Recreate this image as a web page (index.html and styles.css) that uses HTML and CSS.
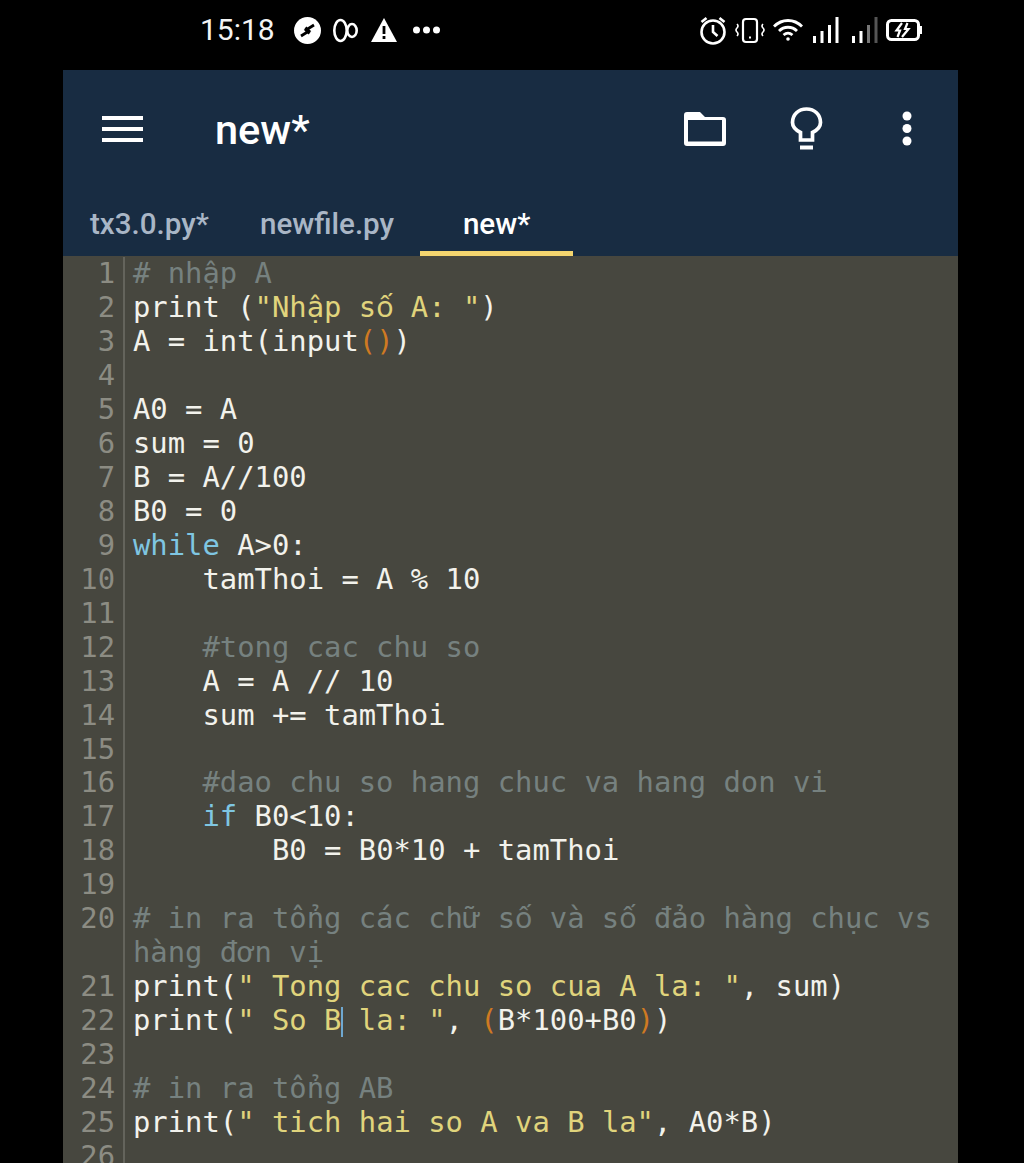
FILE: index.html
```html
<!DOCTYPE html>
<html lang="vi">
<head>
<meta charset="utf-8">
<title>new*</title>
<link rel="stylesheet" href="styles.css">
</head>
<body>
<div class="status">
  <div class="status-left">
    <span class="time">15:18</span>
    <svg width="27" height="27" viewBox="0 0 27 27"><circle cx="13.5" cy="13.5" r="13.5" fill="#fff"/><path d="M20 8L12 13L15.500 16.500M7 19L15 14L11.500 10.500" fill="none" stroke="#000" stroke-width="2.800"/></svg>
    <svg width="25" height="27" viewBox="0 0 25 27" fill="none" stroke="#fff" stroke-width="2.600"><ellipse cx="7.500" cy="13.500" rx="6.200" ry="10.500"/><ellipse cx="19" cy="13.500" rx="4.700" ry="6.500"/></svg>
    <svg class="tri" width="26" height="24" viewBox="0 0 26 24"><path d="M13 0L26 24H0Z" fill="#fff"/><path d="M11.600 8h2.800v8h-2.800zM11.600 18h2.800v3h-2.800z" fill="#000"/></svg>
    <svg class="more" width="27" height="8" viewBox="0 0 27 8" fill="#fff"><circle cx="3.500" cy="4" r="3.500"/><circle cx="13.500" cy="4" r="3.500"/><circle cx="23.500" cy="4" r="3.500"/></svg>
  </div>
  <div class="status-right">
    <svg width="26" height="29" viewBox="0 0 26 29" fill="none" stroke="#fff" stroke-width="2.600"><circle cx="13" cy="16" r="11.500"/><path d="M13 9v7l4.500 4M1.500 6l5-4M24.500 6l-5-4"/></svg>
    <svg class="vib" width="30" height="27" viewBox="0 0 30 27" fill="none" stroke="#fff" stroke-width="2"><rect x="8" y="2" width="14" height="23" rx="3" stroke-width="2.200"/><path d="M15 19.500v2"/><path d="M2 7q2 2 0 4t0 4 0 4M28 7q-2 2 0 4t0 4 0 4" stroke-width="1.600"/></svg>
    <svg class="wifi" width="30" height="22" viewBox="0 0 30 22" fill="none" stroke="#fff" stroke-width="2.800"><path d="M1 7.500C9-.5 21-.5 29 7.500M6 12c5-5 13-5 18 0M10.500 16c3-2.500 6-2.500 9 0"/><circle cx="15" cy="20" r="1.800" fill="#fff" stroke="none"/></svg>
    <svg class="sig" width="25.500" height="26" viewBox="0 0 25.500 26" fill="#fff"><rect x="0" y="19" width="3" height="7"/><rect x="7.500" y="14" width="3" height="12"/><rect x="15" y="8" width="3" height="18"/><rect x="22.500" y="0" width="3" height="26"/></svg>
    <svg class="sig2" width="25.500" height="26" viewBox="0 0 25.500 26" fill="#fff"><rect x="0" y="19" width="3" height="7"/><rect x="7.500" y="14" width="3" height="12"/><rect x="15" y="8" width="3" height="18" fill="#777"/><rect x="22.500" y="0" width="3" height="26" fill="#555"/></svg>
    <svg class="bat" width="36" height="22" viewBox="0 0 36 22" fill="none" stroke="#fff"><rect x="1.500" y="1.500" width="31" height="19" rx="4" stroke-width="3"/><rect x="34" y="7" width="2" height="8" fill="#fff" stroke="none"/><path d="M16 4L10.500 11.500H14L11.500 18M21.500 4L19 10H22.500L16 18" stroke-width="2.200"/></svg>
  </div>
</div>

<main class="app">
  <header class="appbar">
    <div class="toolbar">
      <svg class="menu" width="41" height="26" viewBox="0 0 41 26" fill="#fff"><rect width="41" height="4"/><rect y="11" width="41" height="4"/><rect y="22" width="41" height="4"/></svg>
      <h1 class="title">new*</h1>
      <div class="actions">
        <svg width="42" height="34" viewBox="0 0 42 34" fill="#fff" fill-rule="evenodd"><path d="M0 3a3 3 0 0 1 3-3H16L21 5H39a3 3 0 0 1 3 3V31a3 3 0 0 1-3 3H3a3 3 0 0 1-3-3ZM4 8V29.500H38V8Z"/></svg>
        <svg width="33" height="43" viewBox="0 0 33 43" fill="none" stroke="#fff" stroke-width="3.700"><path d="M10.500 33v-7.500C5.500 23 2.500 19.500 2.500 15.500 2.500 7.500 8.500 2 16.500 2S30.500 7.500 30.500 15.500c0 4-3 7.500-8 10V33z"/><path d="M10 40.500h13" stroke-width="4"/></svg>
        <svg width="10" height="35" viewBox="0 0 10 35" fill="#fff"><circle cx="5" cy="5" r="4.500"/><circle cx="5" cy="17.500" r="4.500"/><circle cx="5" cy="30" r="4.500"/></svg>
      </div>
    </div>
    <nav class="tabs">
      <span class="tab first">tx3.0.py*</span>
      <span class="tab">newfile.py</span>
      <span class="tab active">new*</span>
    </nav>
  </header>

  <section class="editor">
    <div class="line"><span class="num">1</span><span class="code com"># nhập A</span></div>
    <div class="line"><span class="num">2</span><span class="code">print (<span class="str">"Nhập s<span class="alt">ố</span> A: "</span>)</span></div>
    <div class="line"><span class="num">3</span><span class="code">A = int(input<span class="par">()</span>)</span></div>
    <div class="line"><span class="num">4</span><span class="code"></span></div>
    <div class="line"><span class="num">5</span><span class="code">A0 = A</span></div>
    <div class="line"><span class="num">6</span><span class="code">sum = 0</span></div>
    <div class="line"><span class="num">7</span><span class="code">B = A//100</span></div>
    <div class="line"><span class="num">8</span><span class="code">B0 = 0</span></div>
    <div class="line"><span class="num">9</span><span class="code"><span class="kw">while</span> A&gt;0:</span></div>
    <div class="line"><span class="num">10</span><span class="code">    tamThoi = A % 10</span></div>
    <div class="line"><span class="num">11</span><span class="code"></span></div>
    <div class="line"><span class="num">12</span><span class="code com">    #tong cac chu so</span></div>
    <div class="line"><span class="num">13</span><span class="code">    A = A // 10</span></div>
    <div class="line"><span class="num">14</span><span class="code">    sum += tamThoi</span></div>
    <div class="line"><span class="num">15</span><span class="code"></span></div>
    <div class="line"><span class="num">16</span><span class="code com">    #dao chu so hang chuc va hang don vi</span></div>
    <div class="line"><span class="num">17</span><span class="code">    <span class="kw">if</span> B0&lt;10:</span></div>
    <div class="line"><span class="num">18</span><span class="code">        B0 = B0*10 + tamThoi</span></div>
    <div class="line"><span class="num">19</span><span class="code"></span></div>
    <div class="line"><span class="num">20</span><span class="code com"># in ra tổng các chữ s<span class="alt">ố</span> và s<span class="alt">ố</span> đảo hàng chục vs hàng đơn vị</span></div>
    <div class="line"><span class="num">21</span><span class="code">print(<span class="str">" Tong cac chu so cua A la: "</span>, sum)</span></div>
    <div class="line"><span class="num">22</span><span class="code">print(<span class="str">" So B<span class="caret"></span> la: "</span>, <span class="par">(</span>B*100+B0<span class="par">)</span>)</span></div>
    <div class="line"><span class="num">23</span><span class="code"></span></div>
    <div class="line"><span class="num">24</span><span class="code com"># in ra tổng AB</span></div>
    <div class="line"><span class="num">25</span><span class="code">print(<span class="str">" tich hai so A va B la"</span>, A0*B)</span></div>
    <div class="line"><span class="num">26</span><span class="code"></span></div>
  </section>
</main>
</body>
</html>
```

FILE: styles.css
```css
* { box-sizing: border-box; }
html, body { margin: 0; height: 100%; }
body {
  background: #000;
  height: 1163px;
  overflow: hidden;
  display: flex;
  flex-direction: column;
  font-family: Roboto, "Liberation Sans", sans-serif;
}
.status {
  height: 70px;
  flex: none;
  display: flex;
  align-items: center;
  justify-content: space-between;
  padding: 0 102px 10px 200px;
  color: #f4f4f4;
}
.status-left, .status-right { display: flex; align-items: center; }
.status-left { gap: 12px; }
.status-left .time { font-size: 30px; margin-right: 7px; line-height: 1; }
.status-left .tri { margin-left: 1px; }
.status-left .more { margin-left: 4px; }
.status-right { gap: 9px; }
.status-right .wifi { margin-left: -1px; }
.status-right .sig { margin-left: 1px; }
.status-right .sig2 { margin-left: 4.5px; }
.status-right .bat { margin-left: -0.5px; }
.app {
  flex: 1;
  min-height: 0;
  width: 895px;
  margin-left: 63px;
  display: flex;
  flex-direction: column;
}
.appbar { background: #182c42; flex: none; height: 186px; display: flex; flex-direction: column; }
.toolbar {
  height: 120px;
  flex: none;
  display: flex;
  align-items: center;
  padding: 0 46px 0 39px;
}
.menu { flex: none; margin-bottom: 2px; }
.title {
  margin: 0 0 0 72px;
  color: #fff;
  font-size: 41.5px;
  font-weight: 500;
  line-height: 1;
}
.actions { margin-left: auto; display: flex; align-items: center; gap: 64px; margin-bottom: 3px; }
.actions svg:last-child { margin-left: 15px; }
.tabs { flex: 1; display: flex; }
.tab {
  padding: 0 26px;
  color: #a9b6c6;
  font-size: 29.6px;
  font-weight: 500;
  line-height: 68px;
  height: 66px;
}
.tab.first { padding-left: 27px; padding-right: 25px; }
.tab.active {
  color: #fff;
  min-width: 153px;
  text-align: center;
  border-bottom: 5px solid #f4d56e;
}
.editor {
  flex: 1;
  min-height: 0;
  overflow: hidden;
  background: #47473f;
  font-family: "DejaVu Sans Mono", "Liberation Mono", monospace;
  font-size: 28.85px;
  line-height: 33.96px;
  color: #f2f2ec;
  padding-top: 1.2px;
}
.line { display: flex; }
.num {
  flex: none;
  padding-right: 8px;
  text-align: right;
  color: #8c8c83;
  border-right: 2px solid #64645c;
  box-sizing: content-box;
  width: 52px;
}
.code {
  flex: 1;
  min-width: 0;
  padding-left: 8px;
  white-space: pre-wrap;
}
.alt {
  font-family: "Noto Sans", sans-serif;
  font-size: 28.7px;
  line-height: 0;
}
.com { color: #76817f; }
.str { color: #e0d47c; }
.kw { color: #7fc6e2; }
.par { color: #cf7a22; }
.caret {
  display: inline-block;
  width: 2px;
  height: 30px;
  margin-right: -2px;
  background: #6fa8d0;
  vertical-align: -7px;
}
```
